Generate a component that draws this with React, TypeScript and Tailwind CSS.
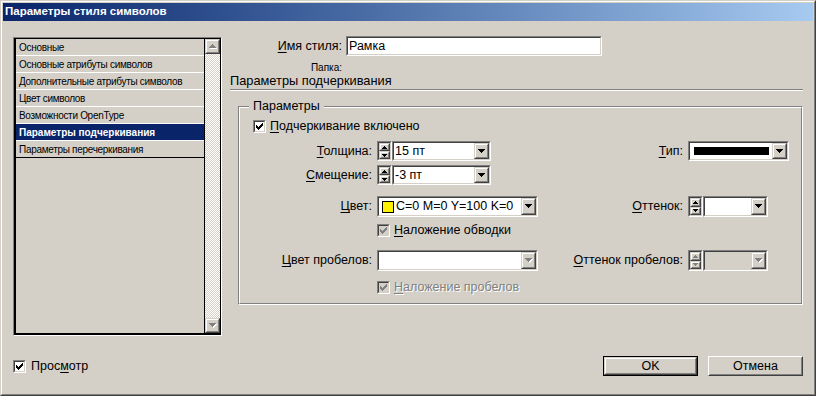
import React from 'react';

const FONT = "font-['Liberation_Sans',Arial,sans-serif]";
const DIS = 'text-[#808080] [text-shadow:1px_1px_0_#fff]';

function Sunken({ className = '', innerClassName = '', children }: { className?: string; innerClassName?: string; children?: React.ReactNode }) {
  return (
    <div className={`border border-t-[#808080] border-l-[#808080] border-b-white border-r-white ${className}`}>
      <div className={`h-full w-full border border-t-[#404040] border-l-[#404040] border-b-[#d4d0c8] border-r-[#d4d0c8] ${innerClassName}`}>
        {children}
      </div>
    </div>
  );
}

function Raised({ className = '', children }: { className?: string; children?: React.ReactNode }) {
  return (
    <div className={`border border-t-[#d4d0c8] border-l-[#d4d0c8] border-b-[#404040] border-r-[#404040] bg-[#d4d0c8] ${className}`}>
      <div className="h-full w-full border border-t-white border-l-white border-b-[#808080] border-r-[#808080] flex items-center justify-center">
        {children}
      </div>
    </div>
  );
}

function DownArrow({ disabled = false }: { disabled?: boolean }) {
  const d = 'M0 0h7v1h-1v1h-1v1h-1v1h-1v-1h-1v-1h-1v-1h-1z';
  return (
    <svg width="8" height="5" viewBox="0 0 8 5" shapeRendering="crispEdges">
      {disabled && <path d={d} fill="#fff" transform="translate(1,1)" />}
      <path d={d} fill={disabled ? '#808080' : '#000'} />
    </svg>
  );
}

function UpArrow({ disabled = false }: { disabled?: boolean }) {
  const d = 'M3 0h1v1h1v1h1v1h1v1h-7v-1h1v-1h1v-1h1z';
  return (
    <svg width="8" height="5" viewBox="0 0 8 5" shapeRendering="crispEdges">
      {disabled && <path d={d} fill="#fff" transform="translate(1,1)" />}
      <path d={d} fill={disabled ? '#808080' : '#000'} />
    </svg>
  );
}

function TinyArrow({ up, disabled }: { up?: boolean; disabled?: boolean }) {
  return (
    <svg width="5" height="3" viewBox="0 0 5 3" shapeRendering="crispEdges">
      <path d={up ? 'M2 0h1v1h1v1h1v1h-5v-1h1v-1h1z' : 'M0 0h5v1h-1v1h-1v1h-1v-1h-1v-1h-1z'} fill={disabled ? '#808080' : '#000'} />
    </svg>
  );
}

function CheckBox({ disabled = false }: { disabled?: boolean }) {
  return (
    <Sunken className="w-[13px] h-[13px] shrink-0" innerClassName={disabled ? 'bg-[#d4d0c8]' : 'bg-white'}>
      <svg width="7" height="7" viewBox="0 0 7 7" shapeRendering="crispEdges" className="m-[1px]">
        <path
          d="M6 0h1v1h-1z M5 1h2v1h-2z M0 2h1v1h-1z M4 2h3v1h-3z M0 3h2v1h-2z M3 3h3v1h-3z M0 4h5v1h-5z M1 5h3v1h-3z M2 6h1v1h-1z"
          fill={disabled ? '#808080' : '#000'}
        />
      </svg>
    </Sunken>
  );
}

function Spinner({ disabled = false, className = '' }: { disabled?: boolean; className?: string }) {
  return (
    <Sunken className={`w-[15px] shrink-0 ${className}`} innerClassName="flex flex-col">
      <Raised className="flex-1">
        <TinyArrow up disabled={disabled} />
      </Raised>
      <Raised className="flex-1">
        <TinyArrow disabled={disabled} />
      </Raised>
    </Sunken>
  );
}

function Combo({ className = '', children, disabled = false, grayField = false }: { className?: string; children?: React.ReactNode; disabled?: boolean; grayField?: boolean }) {
  return (
    <Sunken className={`shrink-0 ${className}`} innerClassName={`flex ${grayField ? 'bg-[#d4d0c8]' : 'bg-white'}`}>
      <div className="flex-1 flex items-center overflow-hidden pl-[1px] whitespace-nowrap">{children}</div>
      <Raised className="w-[15px]">
        <DownArrow disabled={disabled} />
      </Raised>
    </Sunken>
  );
}

function U({ children }: { children: React.ReactNode }) {
  return <span className="underline underline-offset-[2px]">{children}</span>;
}

const ITEMS = [
  'Основные',
  'Основные атрибуты символов',
  'Дополнительные атрибуты символов',
  'Цвет символов',
  'Возможности OpenType',
  'Параметры подчеркивания',
  'Параметры перечеркивания',
];
const SELECTED = 5;

export default function App() {
  return (
    <div className={`w-[816px] h-[396px] bg-[#d4d0c8] border border-t-[#d4d0c8] border-l-[#d4d0c8] border-b-[#404040] border-r-[#404040] text-black ${FONT}`}>
      <div className="h-full w-full border border-t-white border-l-white border-b-[#808080] border-r-[#808080] p-[1px] flex flex-col">
        {/* Title bar */}
        <div className="h-[18px] shrink-0 bg-gradient-to-r from-[#0a246a] to-[#a6caf0] flex items-center pl-[2px]">
          <span className="text-white font-bold text-[11.5px] leading-none">Параметры стиля символов</span>
        </div>

        {/* Main */}
        <div className="flex items-start mt-[15px] pl-[10px]">
          {/* List */}
          <div className="mt-[1px] w-[209px] h-[299px] shrink-0 border border-t-[#808080] border-l-[#808080] border-b-white border-r-white">
            <div className="h-full w-full flex border-l-2 border-t border-b-2 border-r border-black">
              <div className="flex-1 border-r border-black text-[10px]">
                {ITEMS.map((item, i) => (
                  <div
                    key={item}
                    className={`h-[17px] flex items-center pl-[3px] whitespace-nowrap ${
                      i === ITEMS.length - 1 ? 'border-b border-black' : 'border-b border-white'
                    } ${i === SELECTED ? 'bg-[#0a246a] text-white font-bold' : 'tracking-[-0.3px]'}`}
                  >
                    {item}
                  </div>
                ))}
              </div>
              <div className="w-[15px] flex flex-col">
                <Raised className="h-[15px] shrink-0">
                  <UpArrow disabled />
                </Raised>
                <div className="flex-1 bg-[repeating-conic-gradient(#ffffff_0_25%,#d4d0c8_0_50%)] bg-[length:2px_2px]" />
                <Raised className="h-[15px] shrink-0">
                  <DownArrow disabled />
                </Raised>
              </div>
            </div>
          </div>

          {/* Right panel */}
          <div className="ml-[8px] w-[573px] text-[12.5px]">
            <div className="flex items-center h-[20px]">
              <div className="w-[113px] text-right pr-[1px]">
                <U>И</U>мя стиля:
              </div>
              <Sunken className="ml-[3px] w-[256px] h-[20px]" innerClassName="bg-white flex items-center pl-[1px]">
                Рамка
              </Sunken>
            </div>
            <div className="h-[14px] mt-[4px] flex items-center">
              <div className="w-[113px] text-right text-[10px] pr-[1px]">Папка:</div>
            </div>
            <div className="h-[16px] leading-[16px] mt-[-1px] text-[12.8px]">Параметры подчеркивания</div>
            <div className="h-[2px] border-t border-t-[#808080] border-b border-b-white" />

            {/* Group */}
            <div className="relative mt-[15px] ml-[8px] w-[565px] h-[199px] border border-t-[#808080] border-l-[#808080] border-b-white border-r-white">
              <div className="absolute left-[10px] top-[-9px] px-[4px] bg-[#d4d0c8] leading-[16px]">Параметры</div>
              <div className="h-full w-full border border-t-white border-l-white border-b-[#808080] border-r-[#808080]">
                <div className="flex items-center h-[13px] mt-[12px] pl-[13px]">
                  <CheckBox />
                  <span className="ml-[4px]">
                    <U>П</U>одчеркивание включено
                  </span>
                </div>

                <div className="flex items-center h-[20px] mt-[8px]">
                  <div className="w-[320px] flex items-center">
                    <div className="w-[137px] text-right pr-[5px]">
                      <U>Т</U>олщина:
                    </div>
                    <Spinner className="h-[20px]" />
                    <Combo className="w-[99px] h-[20px]">15 пт</Combo>
                  </div>
                  <div className="w-[128px] text-right pr-[5px]">
                    <U>Т</U>ип:
                  </div>
                  <Combo className="w-[101px] h-[20px]">
                    <div className="h-[8px] w-[75px] bg-black ml-[3px]" />
                  </Combo>
                </div>

                <div className="flex items-center h-[20px] mt-[4px]">
                  <div className="w-[320px] flex items-center">
                    <div className="w-[137px] text-right pr-[5px]">
                      <U>С</U>мещение:
                    </div>
                    <Spinner className="h-[20px]" />
                    <Combo className="w-[99px] h-[20px]">-3 пт</Combo>
                  </div>
                </div>

                <div className="flex items-center h-[21px] mt-[11px]">
                  <div className="w-[320px] flex items-center">
                    <div className="w-[137px] text-right pr-[5px]">
                      <U>Ц</U>вет:
                    </div>
                    <Combo className="w-[161px] h-[21px]">
                      <div className="w-[12px] h-[12px] bg-[#fff200] border border-black mx-[2px] shrink-0" />
                      <span>C=0 M=0 Y=100 K=0</span>
                    </Combo>
                  </div>
                  <div className="w-[128px] text-right pr-[5px]">
                    <U>О</U>ттенок:
                  </div>
                  <Spinner className="h-[21px]" />
                  <Combo className="w-[65px] h-[21px]" />
                </div>

                <div className="flex items-center h-[13px] mt-[7px] pl-[137px]">
                  <CheckBox disabled />
                  <span className="ml-[4px]">
                    <U>Н</U>аложение обводки
                  </span>
                </div>

                <div className="flex items-center h-[21px] mt-[13px]">
                  <div className="w-[320px] flex items-center">
                    <div className="w-[137px] text-right pr-[5px]">
                      <U>Ц</U>вет пробелов:
                    </div>
                    <Combo className="w-[161px] h-[21px]" disabled />
                  </div>
                  <div className="w-[128px] text-right pr-[5px]">
                    <U>О</U>ттенок пробелов:
                  </div>
                  <Spinner className="h-[21px]" disabled />
                  <Combo className="w-[65px] h-[21px]" disabled grayField />
                </div>

                <div className="flex items-center h-[13px] mt-[10px] pl-[137px]">
                  <CheckBox disabled />
                  <span className={`ml-[4px] ${DIS}`}>
                    <U>Н</U>аложение пробелов
                  </span>
                </div>
              </div>
            </div>
          </div>
        </div>

        {/* Bottom row */}
        <div className="flex items-center h-[20px] mt-[20px] pl-[10px] pr-[10px] text-[12.5px]">
          <CheckBox />
          <span className="ml-[5px]">
            Прос<U>м</U>отр
          </span>
          <div className="flex-1" />
          <div className="w-[95px] h-[20px] border border-black">
            <Raised className="h-full w-full">OK</Raised>
          </div>
          <div className="ml-[10px] w-[95px] h-[20px] border border-t-white border-l-white border-b-[#404040] border-r-[#404040] bg-[#d4d0c8]">
            <div className="h-full w-full border border-t-[#d4d0c8] border-l-[#d4d0c8] border-b-[#808080] border-r-[#808080] flex items-center justify-center">
              Отмена
            </div>
          </div>
        </div>
      </div>
    </div>
  );
}
